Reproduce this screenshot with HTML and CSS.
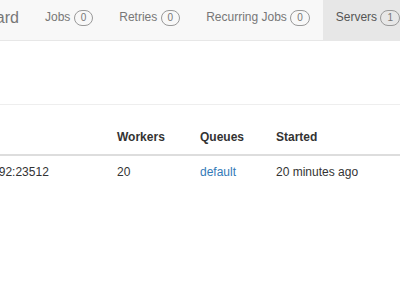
FILE: index.html
```html
<!DOCTYPE html>
<html lang="en">
<head>
    <meta charset="UTF-8">
    <meta name="viewport" content="width=device-width, initial-scale=1.0">
    <title>Servers - Hangfire Dashboard</title>
    <link rel="stylesheet" href="styles.css">
</head>
<body>

    <div class="page">
        <div class="navbar">
            <a class="navbar-brand" href="#">Hangfire Dashboard</a>
            <ul class="nav">
                <li><a href="#">Jobs <span class="badge">0</span></a></li>
                <li><a href="#">Retries <span class="badge">0</span></a></li>
                <li><a href="#">Recurring Jobs <span class="badge">0</span></a></li>
                <li class="active"><a href="#">Servers <span class="badge">1</span></a></li>
            </ul>
        </div>

        <div class="content">
            <h1 class="page-header">Servers</h1>

            <table class="table">
                <thead>
                    <tr>
                        <th class="col-name">Name</th>
                        <th class="col-workers">Workers</th>
                        <th class="col-queues">Queues</th>
                        <th class="col-started">Started</th>
                        <th>Heartbeat</th>
                    </tr>
                </thead>
                <tbody>
                    <tr>
                        <td>webapp-production-server-0192:23512</td>
                        <td>20</td>
                        <td><a href="#">default</a></td>
                        <td>20 minutes ago</td>
                        <td>a few seconds ago</td>
                    </tr>
                </tbody>
            </table>
        </div>
    </div>

</body>
</html>
```

FILE: styles.css
```css
body {
    font-family: 'Liberation Sans', Arial, sans-serif;
    font-size: 12px;
    color: #333;
    background: #fff;
    margin: 0;
    overflow: hidden;
}

a {
    text-decoration: none;
    color: #337ab7;
}

/* the shot shows the right part of the page only */
.page {
    width: 704px;
    margin-left: -166px;
}

.navbar {
    display: flex;
    height: 40px;
    background-color: #f8f8f8;
    border-bottom: 1px solid #e7e7e7;
}

.navbar-brand {
    width: 198px;
    box-sizing: border-box;
    padding: 8px 13px 0 0;
    text-align: right;
    font-size: 16px;
    line-height: 20px;
    color: #777;
}

.nav {
    display: flex;
    list-style: none;
    margin: 0;
    padding: 0;
}

.nav a {
    display: block;
    height: 100%;
    box-sizing: border-box;
    padding: 9px 13px 0;
    line-height: 17px;
    color: #777;
    white-space: nowrap;
}

.nav .active a {
    background-color: #e7e7e7;
    color: #555;
}

.badge {
    display: inline-block;
    vertical-align: 0;
    padding: 0 6px;
    font-size: 10px;
    line-height: 14px;
    color: #777;
    border: 1px solid #999;
    border-radius: 10px;
}

.page-header {
    margin: 21px 0 16px;
    padding-bottom: 8px;
    border-bottom: 1px solid #eee;
    font-size: 31px;
    font-weight: 500;
    line-height: 34px;
}

.table {
    width: 100%;
    table-layout: fixed;
    border-collapse: collapse;
}

.table th,
.table td {
    padding: 8px;
    line-height: 17px;
    text-align: left;
    white-space: nowrap;
}

.table th {
    border-bottom: 2px solid #ddd;
}

.col-name {
    width: 259px;
}

.col-workers {
    width: 67px;
}

.col-queues {
    width: 60px;
}

.col-started {
    width: 134px;
}
```
